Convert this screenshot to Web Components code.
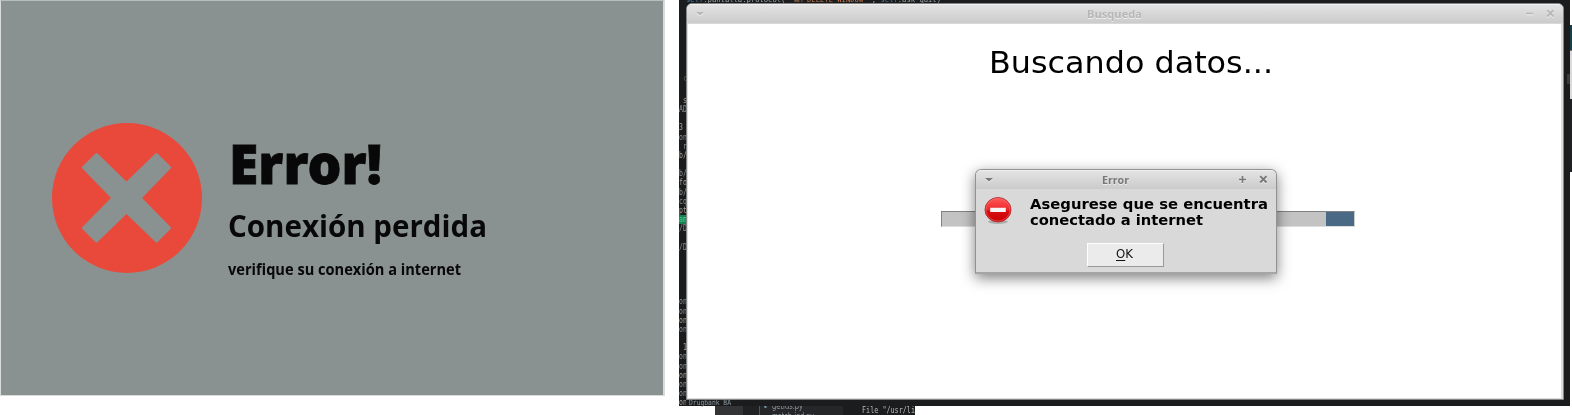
<!DOCTYPE html>
<html lang="es"><head><meta charset="utf-8"><title>Error de conexión</title>
<style>html,body{margin:0;background:#fff;overflow:hidden}body{width:1572px;height:415px;font-family:"Open Sans",sans-serif}</style></head>
<body><error-screens></error-screens>
<script>
const define=(name,html,setup)=>customElements.define(name,class extends HTMLElement{
  connectedCallback(){
    if(this.shadowRoot)return;
    const t=document.createElement('template');t.innerHTML=html;
    this.attachShadow({mode:'open'}).append(t.content.cloneNode(true));
    if(setup)setup(this,this.shadowRoot);
  }});

// A single line of text condensed or expanded to the width in its "w" attribute.
define('fit-text',`<style>:host{display:block;white-space:pre;overflow:visible}span{display:inline-block;transform-origin:0 50%}</style><span><slot></slot></span>`,
(el,root)=>{const s=root.querySelector('span'),w=+el.getAttribute('w');el.style.width=w+'px';
  s.style.transform=`scaleX(${w/s.getBoundingClientRect().width})`;});

define('cross-icon',`<style>:host{display:block;width:150px;height:150px}svg{display:block}</style>
<svg width="150" height="150" viewBox="0 0 150 150"><circle cx="75" cy="75" r="75" fill="#e9493b"/>
<path fill="#899290" stroke="#899290" stroke-width="3" stroke-linejoin="round" d="M44.500 31.500 74.500 60.500 104.500 31.500 117.500 44.500 88 75 117.500 105 104.500 118 74.500 89 44.500 118 31.500 105 61 75 31.500 44.500Z"/></svg>`);

define('lost-connection',`<style>:host{display:flex;box-sizing:border-box;width:665px;height:396px;background:#899290;border:1px solid #d9dada;border-right-width:2px;border-top-color:#b9bebd;padding:122px 0 0 51px;gap:25px;color:#080808}
.t{padding-top:9px}.a{font:900 54.600px/62px "Noto Sans","Open Sans",sans-serif;margin-left:2px;-webkit-text-stroke:.8px #080808}.b{font:700 31px/42px "Open Sans",sans-serif;margin:10px 0 0 1px}.c{font:700 15.500px/22px "Open Sans",sans-serif;margin:12px 0 0 1px}</style>
<cross-icon></cross-icon><div class="t"><fit-text class="a" w="153">Error!</fit-text><fit-text class="b" w="259">Conexión perdida</fit-text><fit-text class="c" w="233">verifique su conexión a internet</fit-text></div>`);

define('title-bar',`<style>:host{display:grid;grid-template-columns:1fr auto 1fr;align-items:center;box-sizing:border-box;height:20px;padding:0 8px 0 9px;background:linear-gradient(#f5f5f5 0,#e2e2e2 8%,#cbcbcb);font:700 11px/19px "Open Sans",sans-serif;text-shadow:0 1px #eee;color:var(--ink)}
.n{margin-right:22px}svg{display:block;stroke:var(--ink);fill:none;filter:drop-shadow(0 1px 0 #eee)}.r{justify-self:end;display:flex;gap:12px;margin-left:-22px}</style>
<svg width="9" height="9"><path d="M0 3h8L4 6.500Z" fill="var(--ink)" stroke="none"/></svg><fit-text class="n" w="28"><slot></slot></fit-text>
<div class="r"><svg width="9" height="9"><path id="m" stroke-width="1.600"/></svg><svg width="9" height="9"><path stroke-width="1.900" d="m1.200 1.200 6.300 6.300m0-6.300L1.200 7.500"/></svg></div>`,
(el,root)=>{root.querySelector('#m').setAttribute('d',el.getAttribute('kind')==='plus'?'M1 4.500h7M4.500 1v7':'M1 4.500h7');
  const n=root.querySelector('.n'),w=+el.getAttribute('w'),s=n.shadowRoot.querySelector('span');s.style.transform='none';n.style.width=w+'px';s.style.transform=`scaleX(${w/s.getBoundingClientRect().width})`;});

define('stop-icon',`<style>:host{display:block;width:28px;height:28px}svg{display:block;overflow:visible}</style>
<svg width="28" height="28"><defs><linearGradient id="g" x2="0" y2="1"><stop stop-color="#ff5a5a"/><stop offset=".5" stop-color="#ee2929"/><stop offset=".55" stop-color="#d90e12"/><stop offset="1" stop-color="#cb0000"/></linearGradient></defs>
<ellipse cx="14" cy="24.800" rx="10" ry="2.200" fill="#777" opacity=".45"/><ellipse cx="14" cy="12.700" rx="13" ry="12.200" fill="url(#g)" stroke="#b42a2d" stroke-width=".9"/><ellipse cx="14" cy="12.700" rx="12" ry="11.200" fill="none" stroke="#ff8585" stroke-width=".7" opacity=".6"/><path d="M6.200 10.700h15.600v4.200H6.200z" fill="#f6f4f4"/></svg>`);

define('error-dialog',`<style>:host{display:block;box-sizing:border-box;width:302px;height:105px;border:1px solid #929292;border-bottom:2px solid #a5a5a5;border-radius:6px 6px 0 0;background:#d9d9d9;box-shadow:0 4px 14px rgba(0,0,0,.5);overflow:hidden}
title-bar{--ink:#777;height:19px}.m{display:flex;padding:8px 0 0 8px;gap:18px;height:45px;box-sizing:border-box}.x{font:700 13.300px/16px "DejaVu Sans",sans-serif;color:#000}
button{display:block;box-sizing:border-box;width:77px;height:24px;margin:9px 0 0 111px;border:1px solid;border-color:#fff #999 #999 #fff;background:#ebebeb;font:12px/20px "DejaVu Sans",sans-serif;padding:0 2px 2px 0;color:#111}button fit-text{margin:0 auto}u{text-underline-offset:2px}</style>
<title-bar kind="plus" w="27">Error</title-bar><div class="m"><stop-icon></stop-icon><div class="x"><fit-text w="238">Asegurese que se encuentra</fit-text><fit-text w="173">conectado a internet</fit-text></div></div><button><fit-text w="17"><u>O</u>K</fit-text></button>`);

define('progress-track',`<style>:host{display:block;box-sizing:border-box;width:414px;height:16px;background:#c3c3c3;border:1px solid #828282;border-right-color:#ccc;border-bottom-color:#ddd}i{display:block;width:28px;height:14px;margin-left:auto;background:#4a6984}</style><i></i>`);

define('search-window',`<style>:host{display:block;box-sizing:border-box;width:878px;height:397px;border:1px solid #858585;border-radius:6px 6px 0 0;background:#fff;overflow:hidden;position:relative}
title-bar{--ink:#b7b7b7;border-bottom:1px solid #d9d9d9}.body{box-sizing:border-box;height:375px;border:1px solid #ddd;border-top:0;border-right-width:2px;padding:18px 0 0 301px}.h{font:30px/42px "DejaVu Sans",sans-serif;color:#000}
progress-track{margin:127px 0 0 -48px}error-dialog{position:absolute;left:288px;top:165px}</style>
<title-bar w="55">Busqueda</title-bar><div class="body"><fit-text class="h" w="284">Buscando datos...</fit-text><progress-track></progress-track></div><error-dialog></error-dialog>`);

// Strip of the code editor that shows around the window.
define('code-gutter',`<style>:host{display:block;width:7px;height:406px;overflow:hidden;font:8.500px/9.200px "DejaVu Sans Mono",monospace;color:#8b9396;padding-top:74px;box-sizing:border-box}
.c{padding-left:4px;height:22px;color:#555}p{margin:0;height:9.160px;white-space:pre}p span{display:inline-block;transform:scaleX(.76);transform-origin:0}.g{background:#158052;color:#3fd494}.b{color:#a8a396}</style><div class="c">c</div><div id="l"></div>`,
(el,root)=>{const rows=[' s','AD','','3','on',' r','b/','','b/','fo','b/','cq','pt','am','/D','','/D','','','','','','on','on','on','on','',' 1','on','on','on','on','on','on'];
 rows.forEach((t,i)=>{const p=document.createElement('p'),s=document.createElement('span');s.textContent=t;p.append(s);if(i===13)p.className='g';else if(i%3===0)p.className='b';root.querySelector('#l').append(p)})});

define('code-desktop',`<style>:host{display:block;width:893px;height:415px;font-family:"DejaVu Sans Mono",monospace}
.d{display:grid;grid-template-columns:7px 878px 1fr;height:406px;width:891px;background:#1b1c1d;position:relative}.mid{display:flex;flex-direction:column;height:406px}
.top{height:3px;overflow:hidden;font-size:7.500px;line-height:9px;color:#a2a6a8}.top fit-text{margin-top:-5px}.k{color:#4a7fae}.o{color:#c47b50}
.bot{height:6px;font-size:7.500px;padding-left:3px;color:#8b979e}.bot fit-text{line-height:6px}
.edge{position:absolute;right:0;top:74px;width:3px;height:10px;background:#393a3b}
.side{position:absolute;left:891px;top:25px;width:2px;height:147px;background:linear-gradient(#173f49 25px,#777 25px 26px,#dadada 26px 74px,#202122 74px)}
.under{display:flex;width:200px;height:9px;margin-left:36px;background:#202122;overflow:hidden;line-height:9px;font-size:9px;color:#8e989b}
.p{width:28px;background:#333435}.q{width:28px;padding-left:3px;box-sizing:border-box;margin-left:16px;margin-right:-15px;border-left:1px solid #555;background:#252627;font-size:8px;line-height:4px;color:#6c9bad}.f{width:71px;background:#252627;font-family:"DejaVu Sans",sans-serif;font-size:8.500px}.f fit-text{line-height:0;height:7px}.f .z{line-height:7px}.s{width:72px;background:#1b1c1d;color:#b5bbbd}.s fit-text{margin-left:19px;line-height:9px}</style>
<div class="d"><code-gutter></code-gutter><div class="mid"><div class="top"><fit-text w="255"><span class="k">self</span>.pantalla.protocol( <span class="o">"WM_DELETE_WINDOW"</span> , <span class="k">self</span>.ask_quit)</fit-text></div><search-window></search-window><div class="bot"><fit-text w="42">Drugbank BA</fit-text></div></div><i class="edge"></i><i class="side"></i></div>
<div class="under"><div class="p"></div><div class="q">•</div><div class="f"><fit-text w="31">getids.py</fit-text><fit-text class="z" w="42">match_ind.py</fit-text></div><div class="s"><fit-text w="53">File "/usr/li</fit-text></div></div>`);

define('error-screens',`<style>:host{display:flex;width:1572px;height:415px;gap:14px;background:#fff}</style><lost-connection></lost-connection><code-desktop></code-desktop>`);
</script></body></html>
